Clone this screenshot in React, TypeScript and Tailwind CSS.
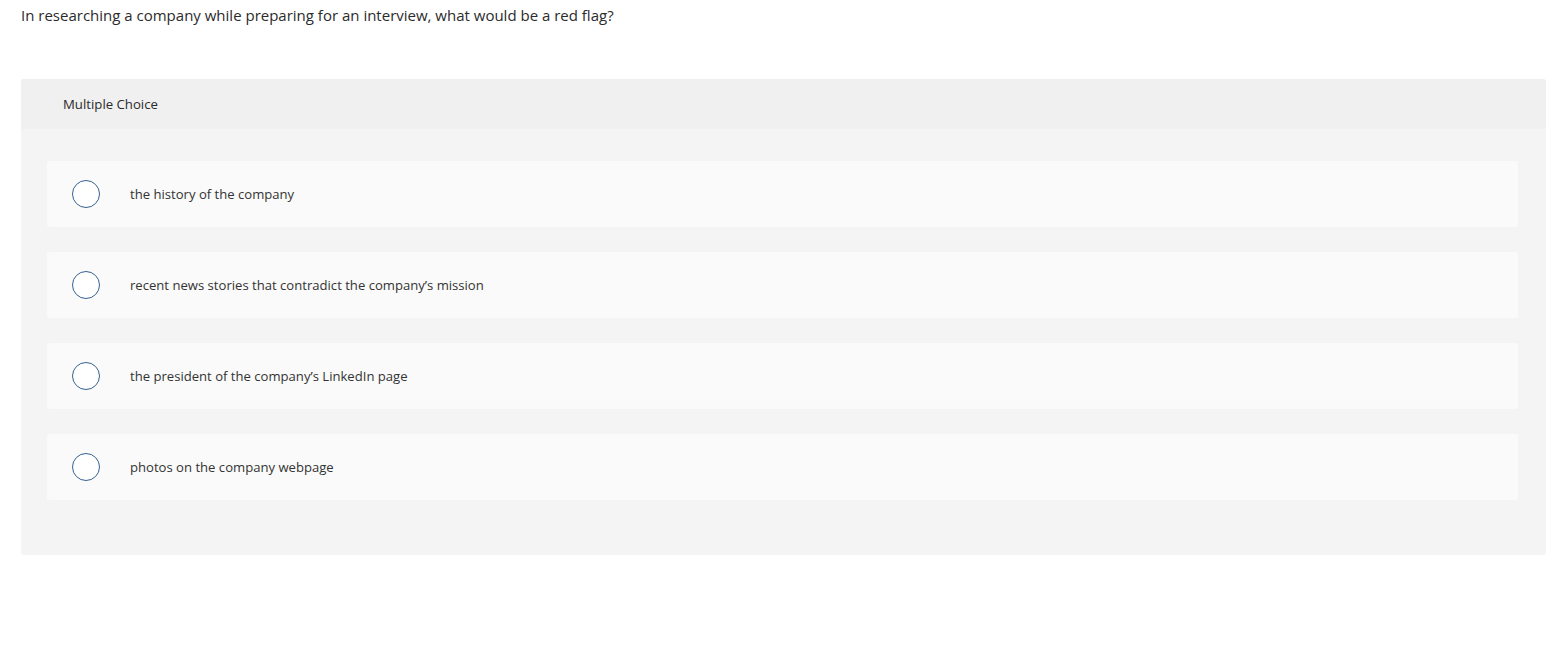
import React from 'react';

const options = [
  'the history of the company',
  'recent news stories that contradict the company’s mission',
  'the president of the company’s LinkedIn page',
  'photos on the company webpage',
];

const App = () => {
  return (
    <div className="min-h-[648px] bg-white pl-[21px] pr-[10px] pt-[5px] font-['Open_Sans','Lato',sans-serif] text-[#333]">
      {/* question */}
      <p className="text-[15px] leading-[20px] text-[#2b2b2b]">
        In researching a company while preparing for an interview, what would be a red flag?
      </p>

      <div className="mt-[54px] overflow-hidden rounded-[3px] bg-[#f4f4f4]">
        {/* header */}
        <div className="flex h-[50px] items-center bg-[#f0f0f0] pt-[2px] pl-[42px] text-[13.2px] text-[#2b2b2b]">
          Multiple Choice
        </div>

        {/* options */}
        <div className="flex flex-col gap-[25px] pl-[26px] pr-[28px] pt-[32px] pb-[55px]">
          {options.map((opt, idx) => (
            <div key={idx} className="flex h-[66px] items-center rounded-[3px] bg-[#fafafa] pl-[25px]">
              <span className="block size-[28px] shrink-0 rounded-full border-[1.5px] border-[#36628f] bg-white" />
              <span className="ml-[30px] pt-[2px] text-[13.1px] text-[#333]">{opt}</span>
            </div>
          ))}
        </div>
      </div>
    </div>
  );
};

export default App;
